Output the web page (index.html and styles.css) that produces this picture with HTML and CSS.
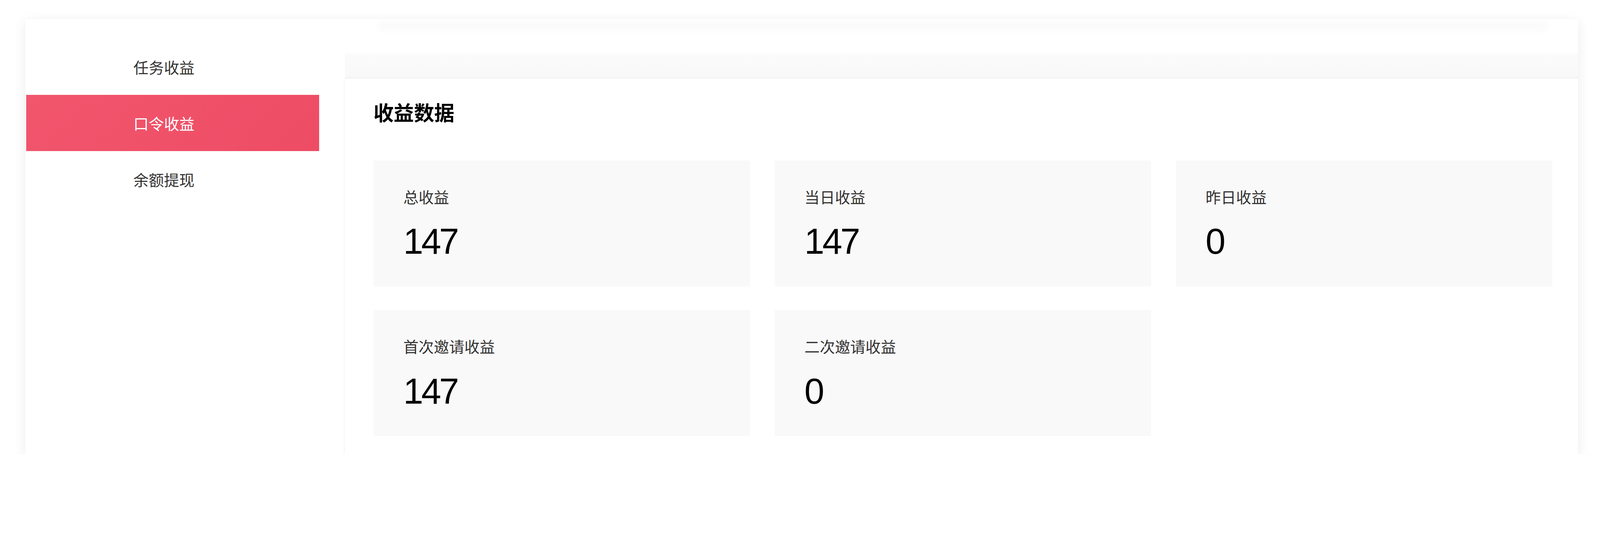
FILE: index.html
```html
<!DOCTYPE html>
<html lang="zh-CN">
<head>
<meta charset="utf-8">
<meta name="viewport" content="width=device-width, initial-scale=1">
<title>收益数据</title>
<link rel="stylesheet" href="styles.css">
</head>
<body>
<div class="layout">
  <aside class="sidebar">
    <div class="nav-item">任务收益</div>
    <div class="nav-item active">口令收益</div>
    <div class="nav-item">余额提现</div>
  </aside>
  <main class="main">
    <div class="top-hint"></div>
    <div class="band"></div>
    <section class="panel">
      <h2 class="panel-title">收益数据</h2>
      <div class="stats">
        <div class="stat">
          <div class="stat-label">总收益</div>
          <div class="stat-value">147</div>
        </div>
        <div class="stat">
          <div class="stat-label">当日收益</div>
          <div class="stat-value">147</div>
        </div>
        <div class="stat">
          <div class="stat-label">昨日收益</div>
          <div class="stat-value">0</div>
        </div>
        <div class="stat">
          <div class="stat-label">首次邀请收益</div>
          <div class="stat-value">147</div>
        </div>
        <div class="stat">
          <div class="stat-label">二次邀请收益</div>
          <div class="stat-value">0</div>
        </div>
      </div>
    </section>
  </main>
</div>
</body>
</html>
```

FILE: styles.css
```css
:root {
  --u: calc(100vw / 4820);
}
html, body {
  margin: 0;
  padding: 0;
  background: #ffffff;
  overflow: hidden;
}
body {
  font-family: "Noto Sans CJK SC", "Noto Sans", sans-serif;
  color: #333333;
}
.layout {
  display: flex;
  margin: calc(58 * var(--u)) calc(66 * var(--u)) 0 calc(77 * var(--u));
  height: calc(1312 * var(--u));
  background: #ffffff;
  box-shadow: 0 calc(8 * var(--u)) calc(36 * var(--u)) rgba(0, 0, 0, 0.08);
}
.sidebar {
  width: calc(885 * var(--u));
  flex: none;
  padding-top: calc(58 * var(--u));
  background: #ffffff;
}
.nav-item {
  height: calc(170 * var(--u));
  line-height: calc(170 * var(--u));
  padding-left: calc(325 * var(--u));
  font-size: calc(46 * var(--u));
  color: #333333;
}
.nav-item.active {
  margin-left: calc(2 * var(--u));
  padding-left: calc(323 * var(--u));
  color: #ffffff;
  background: linear-gradient(135deg, #f1566d 0%, #ee4c65 100%);
}
.main {
  flex: 1;
  display: flex;
  flex-direction: column;
  padding-left: calc(77 * var(--u));
  padding-top: calc(4 * var(--u));
}
.top-hint {
  flex: none;
  height: calc(34 * var(--u));
  margin: 0 calc(90 * var(--u)) calc(65 * var(--u)) calc(100 * var(--u));
  background: linear-gradient(180deg, #fcfcfc 0%, #fafafa 50%, #fdfdfd 100%);
  filter: blur(calc(8 * var(--u)));
}
.band {
  height: calc(76 * var(--u));
  background: linear-gradient(180deg, #fbfbfb 0%, #f8f8f8 100%);
  flex: none;
}
.panel {
  flex: 1;
  background: #ffffff;
  box-shadow: calc(-3 * var(--u)) 0 calc(6 * var(--u)) rgba(0, 0, 0, 0.03),
              0 calc(-2 * var(--u)) calc(4 * var(--u)) rgba(0, 0, 0, 0.04);
  padding: calc(61 * var(--u)) calc(78 * var(--u)) 0 calc(86 * var(--u));
}
.panel-title {
  margin: 0;
  font-size: calc(61 * var(--u));
  line-height: calc(80 * var(--u));
  font-weight: 700;
  color: #000000;
}
.stats {
  margin-top: calc(106 * var(--u));
  display: grid;
  grid-template-columns: repeat(3, 1fr);
  column-gap: calc(74 * var(--u));
  row-gap: calc(71 * var(--u));
}
.stat {
  height: calc(380 * var(--u));
  box-sizing: border-box;
  padding: calc(78 * var(--u)) 0 0 calc(90 * var(--u));
  background: #f9f9f9;
}
.stat-label {
  font-size: calc(46 * var(--u));
  line-height: calc(60 * var(--u));
  color: #333333;
}
.stat-value {
  margin-top: calc(54 * var(--u));
  font-family: "Liberation Sans", "Noto Sans", sans-serif;
  font-size: calc(108 * var(--u));
  line-height: calc(104 * var(--u));
  letter-spacing: calc(-6 * var(--u));
  color: #000000;
}
```
